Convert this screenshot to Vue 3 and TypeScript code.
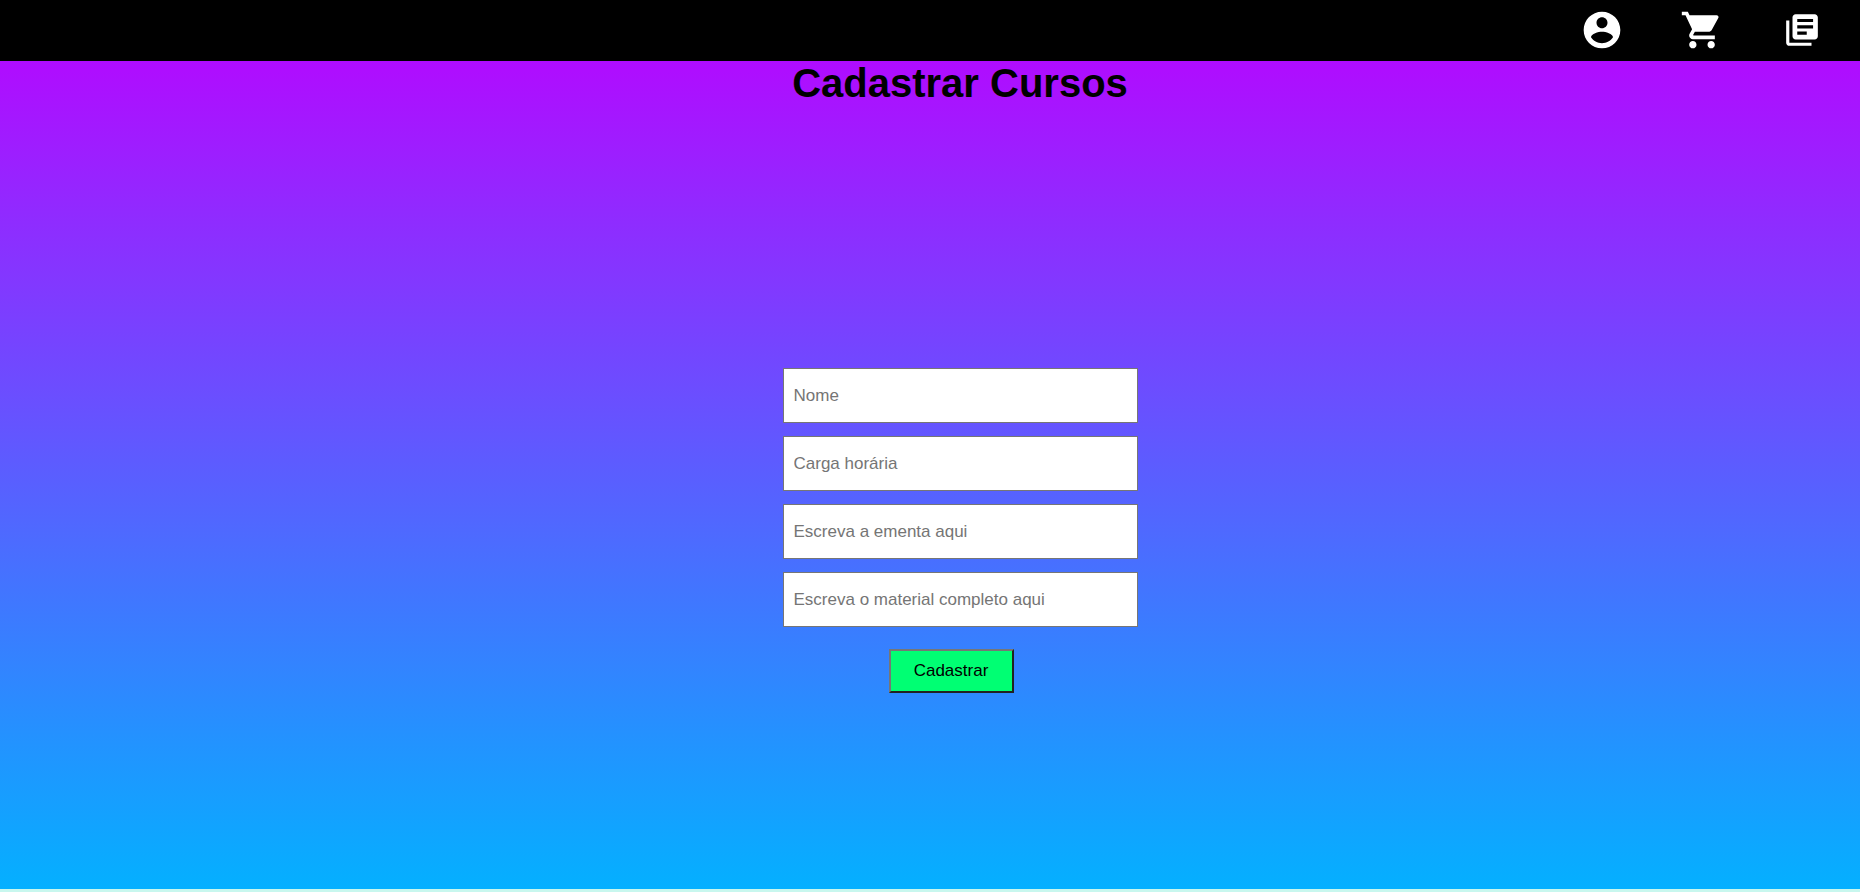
<script setup lang="ts">
import { reactive } from 'vue'

type FieldKey = 'nome' | 'carga' | 'ementa' | 'material'

interface Field {
  key: FieldKey
  label: string
}

interface NavItem {
  label: string
  size: number
  path: string
}

const navItems: NavItem[] = [
  {
    label: 'Perfil',
    size: 44,
    path: 'M12 2C6.48 2 2 6.48 2 12s4.48 10 10 10 10-4.48 10-10S17.52 2 12 2zm0 3c1.66 0 3 1.34 3 3s-1.34 3-3 3-3-1.34-3-3 1.34-3 3-3zm0 14.2c-2.5 0-4.71-1.28-6-3.22.03-1.99 4-3.08 6-3.08 1.99 0 5.97 1.09 6 3.08-1.29 1.94-3.5 3.22-6 3.22z',
  },
  {
    label: 'Carrinho',
    size: 44,
    path: 'M7 18c-1.1 0-1.99.9-1.99 2S5.9 22 7 22s2-.9 2-2-.9-2-2-2zM1 2v2h2l3.6 7.59-1.35 2.45c-.16.28-.25.61-.25.96 0 1.1.9 2 2 2h12v-2H7.42c-.14 0-.25-.11-.25-.25l.03-.12.9-1.63h7.45c.75 0 1.41-.41 1.75-1.03l3.58-6.49c.08-.14.12-.31.12-.48 0-.55-.45-1-1-1H5.21l-.94-2H1zm16 16c-1.1 0-1.99.9-1.99 2s.89 2 1.99 2 2-.9 2-2-.9-2-2-2z',
  },
  {
    label: 'Cursos',
    size: 38,
    path: 'M4 6H2v14c0 1.1.9 2 2 2h14v-2H4V6zm16-4H8c-1.1 0-2 .9-2 2v12c0 1.1.9 2 2 2h12c1.1 0 2-.9 2-2V4c0-1.1-.9-2-2-2zm-1 9H9V9h10v2zm-4 4H9v-2h6v2zm4-8H9V5h10v2z',
  },
]

const fields: Field[] = [
  { key: 'nome', label: 'Nome' },
  { key: 'carga', label: 'Carga horária' },
  { key: 'ementa', label: 'Escreva a ementa aqui' },
  { key: 'material', label: 'Escreva o material completo aqui' },
]

const curso = reactive<Record<FieldKey, string>>({
  nome: '',
  carga: '',
  ementa: '',
  material: '',
})
</script>

<template>
  <div class="page">
    <header class="topbar">
      <nav class="nav">
        <a v-for="item in navItems" :key="item.label" class="nav-link" href="#" :aria-label="item.label">
          <svg :width="item.size" :height="item.size" viewBox="0 0 24 24" fill="#fff" aria-hidden="true">
            <path :d="item.path" />
          </svg>
        </a>
      </nav>
    </header>
    <main class="content">
      <h1 class="title">Cadastrar Cursos</h1>
      <form class="form" @submit.prevent>
        <input
          v-for="field in fields"
          :key="field.key"
          v-model="curso[field.key]"
          class="field"
          type="text"
          :name="field.key"
          :placeholder="field.label"
          :aria-label="field.label"
        />
        <button class="submit" type="submit">Cadastrar</button>
      </form>
    </main>
  </div>
</template>

<style>
body {
  margin: 0;
}
</style>

<style scoped>
.page {
  display: flex;
  flex-direction: column;
  box-sizing: border-box;
  min-height: 100vh;
  padding-bottom: 3px;
  background: #c8f7ee;
  font-family: Arial, "Liberation Sans", sans-serif;
}

.topbar {
  background: #000;
}

.nav {
  display: flex;
  justify-content: flex-end;
  padding: 0 8px 2px 0;
}

.nav-link {
  display: flex;
  align-items: center;
  justify-content: center;
  width: 100px;
  height: 59px;
}

.content {
  flex: 1;
  display: flex;
  flex-direction: column;
  align-items: center;
  padding-left: 60px;
  background: linear-gradient(#b00cff, #04b0ff);
}

.title {
  margin: 0;
  font-size: 40px;
  line-height: 44px;
  color: #000;
}

.form {
  display: flex;
  flex-direction: column;
  gap: 13px;
  width: 355px;
  margin: 263px 0 48px;
}

.field {
  box-sizing: border-box;
  width: 100%;
  height: 55px;
  padding: 0 10px;
  border: 1px solid #767676;
  border-radius: 0;
  background: #fff;
  font: 17px/20px Arial, "Liberation Sans", sans-serif;
  color: #000;
}

.field::placeholder {
  color: #757575;
  opacity: 1;
}

.submit {
  align-self: center;
  box-sizing: border-box;
  width: 125px;
  height: 44px;
  margin: 9px 18px 0 0;
  padding: 0;
  border: 2px solid;
  border-color: #767676 #212121 #212121 #767676;
  border-radius: 0;
  background: #00ff73;
  font: 17px/20px Arial, "Liberation Sans", sans-serif;
  color: #000;
  cursor: pointer;
}
</style>
